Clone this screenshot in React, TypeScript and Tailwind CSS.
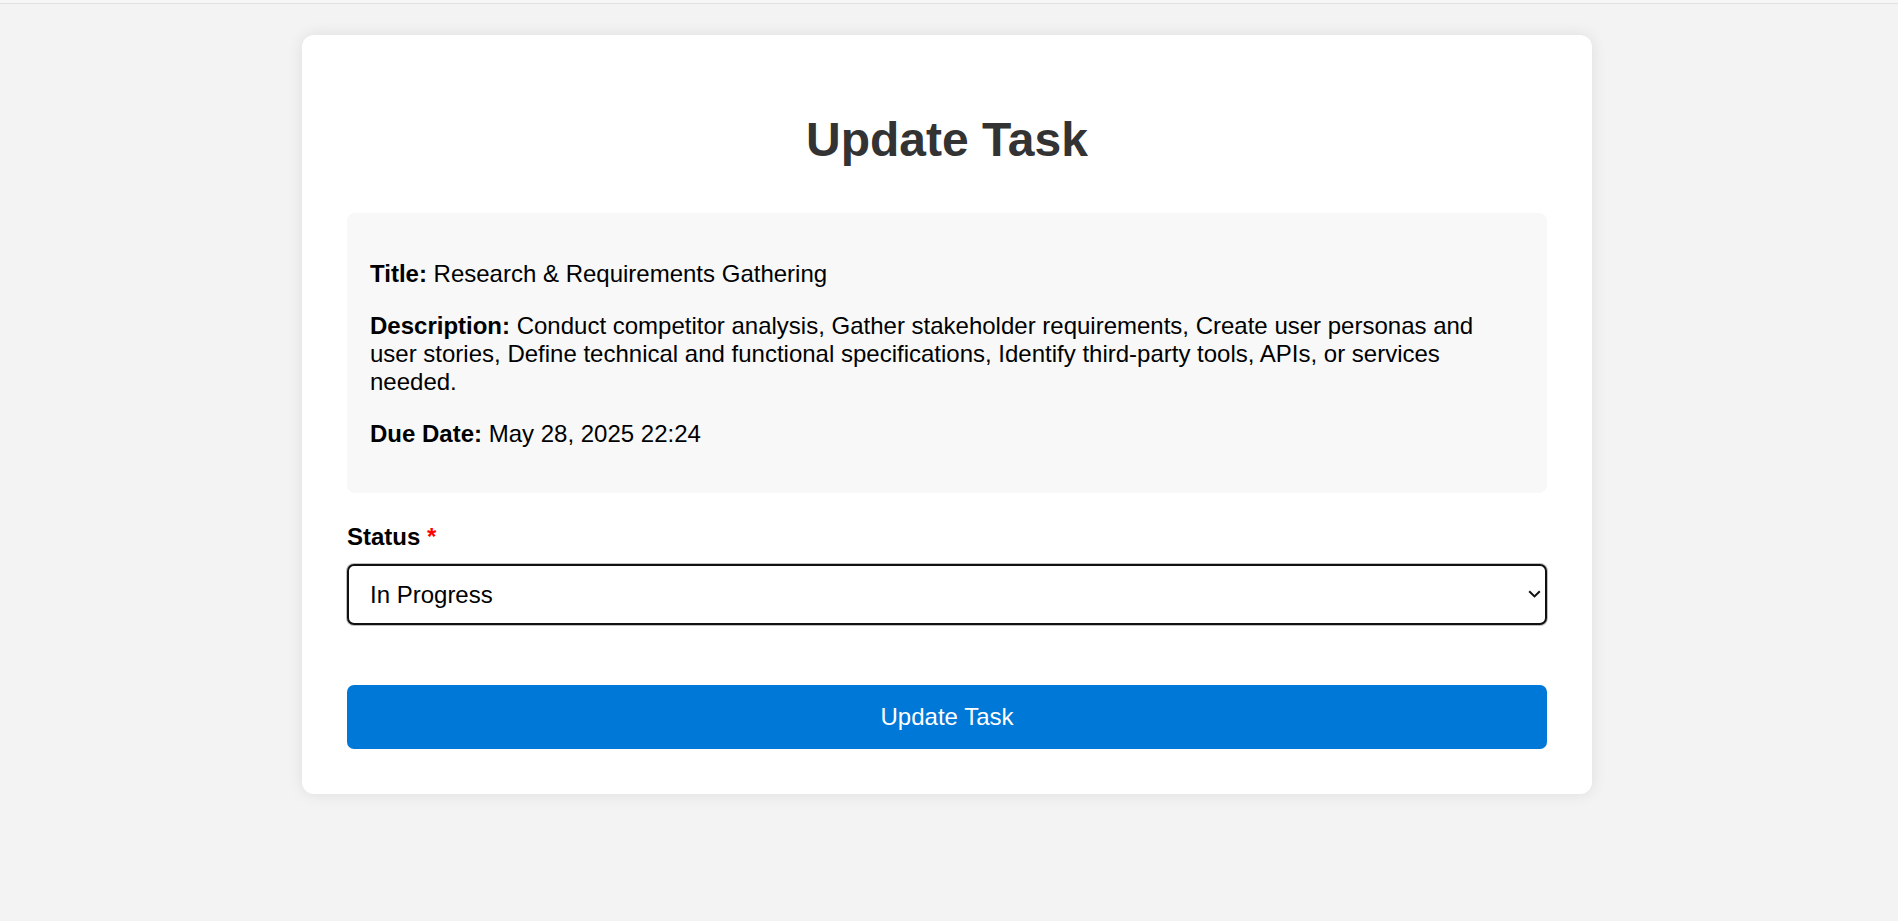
import { useState } from 'react';

const task = {
  title: 'Research & Requirements Gathering',
  description:
    'Conduct competitor analysis, Gather stakeholder requirements, Create user personas and user stories, Define technical and functional specifications, Identify third-party tools, APIs, or services needed.',
  dueDate: 'May 28, 2025 22:24',
};

export default function App() {
  const [status, setStatus] = useState('In Progress');

  return (
    <div className="min-h-screen bg-[#f3f3f3] font-['Liberation_Sans',Arial,sans-serif] text-black">
      <div className="h-[4px] bg-[#f6f6f6] border-b border-[#e2e2e2]" />

      <div className="mx-auto mt-[31px] w-[1290px] -translate-x-[2px] bg-white rounded-[12px] shadow-[0_0_16px_rgba(0,0,0,0.09)] p-[45px]">
        <h1 className="mt-[32px] mb-[46px] text-center text-[48px] leading-[1.15] font-bold text-[#333]">
          Update Task
        </h1>

        <div className="bg-[#f8f8f8] rounded-[8px] px-[23px] pt-[23px] pb-[21px] mb-[30px] text-[24px] leading-[28px]">
          <p className="my-[24px]">
            <strong>Title:</strong> {task.title}
          </p>
          <p className="my-[24px]">
            <strong>Description:</strong> {task.description}
          </p>
          <p className="my-[24px]">
            <strong>Due Date:</strong> {task.dueDate}
          </p>
        </div>

        <form onSubmit={(e) => e.preventDefault()}>
          <label htmlFor="status" className="block mb-[13px] text-[24px] leading-[28px] font-bold">
            Status <span className="text-[#ff0000]">*</span>
          </label>
          <div className="relative mb-[60px]">
            <select
              id="status"
              value={status}
              onChange={(e) => setStatus(e.target.value)}
              className="block w-full h-[61px] appearance-none bg-white border-2 border-[#111] rounded-[7px] pl-[21px] pr-[40px] text-[24px] leading-[1.15] text-black outline-none shadow-[0_0_0_1px_rgba(0,0,0,0.25)]"
            >
              <option>To Do</option>
              <option>In Progress</option>
              <option>Completed</option>
            </select>
            <svg
              className="pointer-events-none absolute right-[6px] top-[26px]"
              width="13"
              height="8"
              viewBox="0 0 13 8"
              fill="none"
            >
              <path d="M1.2 1.2 L6.5 6.4 L11.8 1.2" stroke="#111" strokeWidth="2" />
            </svg>
          </div>
          <button
            type="submit"
            className="block w-full h-[64px] bg-[#0078d7] text-white text-[24px] leading-[1.15] rounded-[7px]"
          >
            Update Task
          </button>
        </form>
      </div>
    </div>
  );
}
